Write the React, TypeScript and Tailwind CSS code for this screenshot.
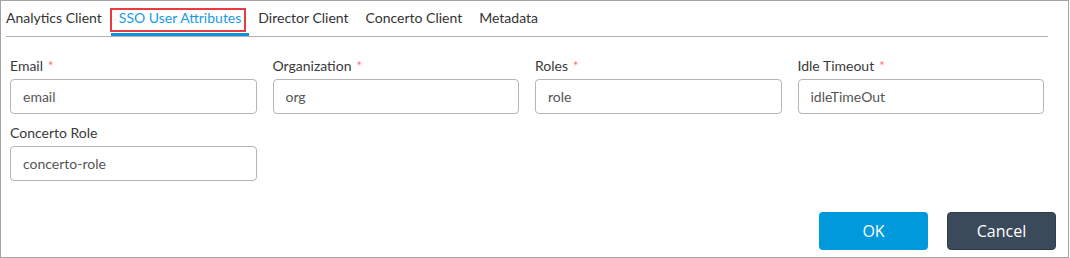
const tabs = ['Analytics Client', 'SSO User Attributes', 'Director Client', 'Concerto Client', 'Metadata'];

const fields = [
  { label: 'Email', value: 'email', required: true },
  { label: 'Organization', value: 'org', required: true },
  { label: 'Roles', value: 'role', required: true },
  { label: 'Idle Timeout', value: 'idleTimeOut', required: true },
  { label: 'Concerto Role', value: 'concerto-role', required: false },
];

function Field({ label, value, required }: { label: string; value: string; required: boolean }) {
  return (
    <div className="flex flex-col">
      <label className="text-sm leading-5 font-normal text-[#3a3a3a] mb-[3px]">
        {label}
        {required && <span className="ml-[5px] text-[13px] text-[#ff7080]">*</span>}
      </label>
      <input
        readOnly
        value={value}
        className="h-[35px] w-full rounded-[4px] border border-[#b5b5b5] bg-white px-3 text-sm text-[#555] outline-none font-['Lato',sans-serif]"
      />
    </div>
  );
}

export default function App() {
  const active = 1;
  return (
    <div className="w-[1069px] h-[258px] border border-[#a3a3a3] bg-white font-['Lato',sans-serif]">
      <div className="ml-[5px] w-[1042px] flex border-b border-[#b3b3b3]">
        {tabs.map((t, i) => (
          <div
            key={t}
            className={
              'relative pt-[7px] pb-[5px] text-sm leading-5 border-b-[3px] ' +
              (i === 0 ? 'pl-0 pr-2 ' : 'px-2 ml-px ') +
              (i === active ? 'text-[#1a9be2] border-[#0b93de]' : 'text-[#333] border-transparent')
            }
          >
            {t}
            {i === active && (
              <span className="absolute -left-px right-[3px] top-[7px] bottom-[1px] border-2 border-[#ea3b41] pointer-events-none" />
            )}
          </div>
        ))}
      </div>

      <div className="ml-[5px] w-[1034px] pl-[4px] pt-[19px]">
        <div className="grid grid-cols-4 gap-x-4 gap-y-[9px] w-[1034px]">
          {fields.map((f) => (
            <Field key={f.label} {...f} />
          ))}
        </div>
      </div>

      <div className="mt-[31px] flex justify-end gap-[19px] pr-3">
        <button className="w-[109px] h-[38px] rounded-[4px] bg-[#0099dc] text-white text-base font-['Open_Sans',sans-serif]">
          OK
        </button>
        <button className="w-[109px] h-[38px] rounded-[4px] bg-[#3b4a5b] border border-[#2f3c4a] text-white text-base font-['Open_Sans',sans-serif]">
          Cancel
        </button>
      </div>
    </div>
  );
}
